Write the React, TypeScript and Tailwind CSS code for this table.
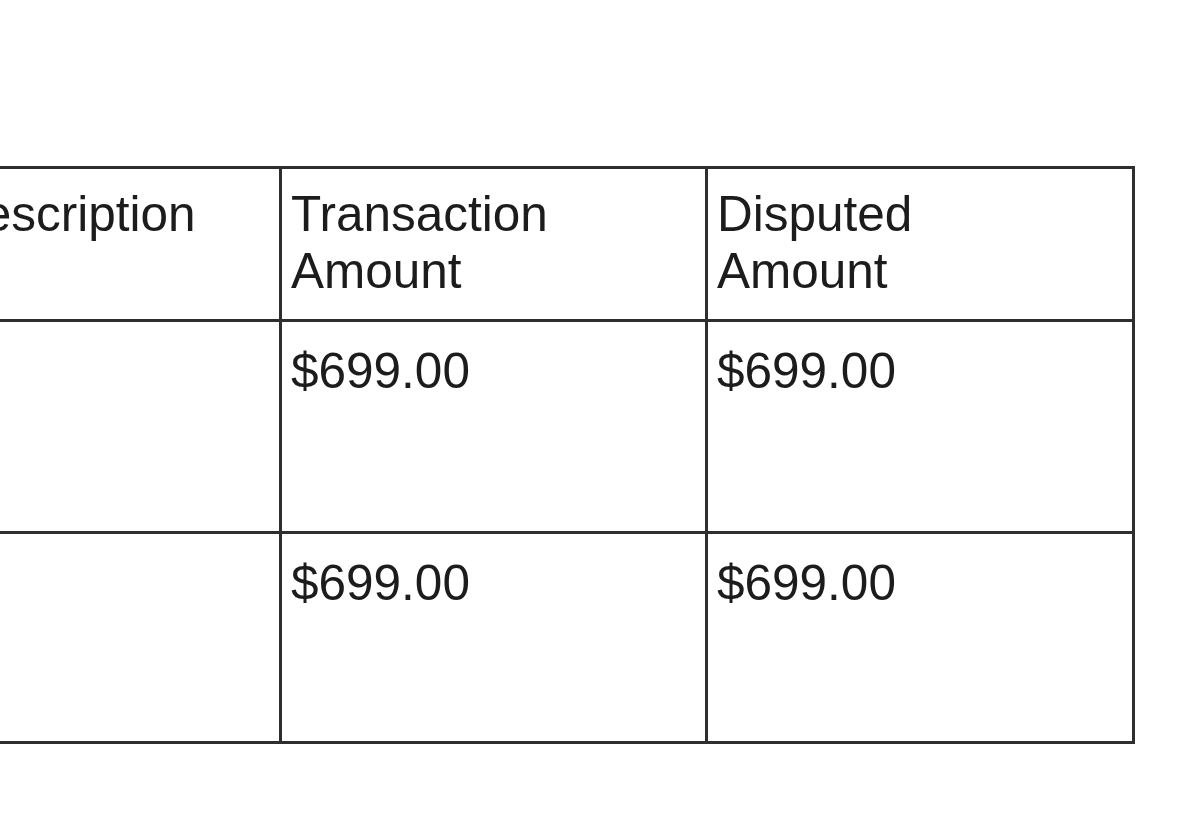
const headers = ['Description', 'Transaction Amount', 'Disputed Amount'];

const rows = [
  ['', '$699.00', '$699.00'],
  ['', '$699.00', '$699.00'],
];

const cols = ['w-[341px] pl-[7px]', 'w-[426px] pl-[9px]', 'w-[427px] pl-[9px]'];

export default function App() {
  return (
    <div
      className="w-[1200px] h-[820px] overflow-hidden bg-white text-[#1c1c1c]"
      style={{ fontFamily: '"Liberation Sans", Arial, sans-serif' }}
    >
      <div className="ml-[-62px] mt-[166px] inline-flex flex-col border-t-[3px] border-l-[3px] border-[#2e2e2e]">
        {/* header row */}
        <div className="flex h-[153px]">
          {headers.map((h, i) => (
            <div
              key={h}
              className={`${cols[i]} shrink-0 border-r-[3px] border-b-[3px] border-[#2e2e2e] pr-2 pt-[16px] text-[49.5px] leading-[57px]`}
            >
              {i === 0 ? (
                h
              ) : (
                <>
                  {h.split(' ')[0]}
                  <br />
                  {h.split(' ')[1]}
                </>
              )}
            </div>
          ))}
        </div>

        {/* data rows */}
        {rows.map((r, ri) => (
          <div key={ri} className={`flex ${ri === 0 ? 'h-[212px]' : 'h-[210px]'}`}>
            {r.map((c, ci) => (
              <div
                key={ci}
                className={`${cols[ci]} shrink-0 border-r-[3px] border-b-[3px] border-[#2e2e2e] pr-2 pt-[20px] text-[49.5px] leading-[57px]`}
              >
                {c}
              </div>
            ))}
          </div>
        ))}
      </div>
    </div>
  );
}
